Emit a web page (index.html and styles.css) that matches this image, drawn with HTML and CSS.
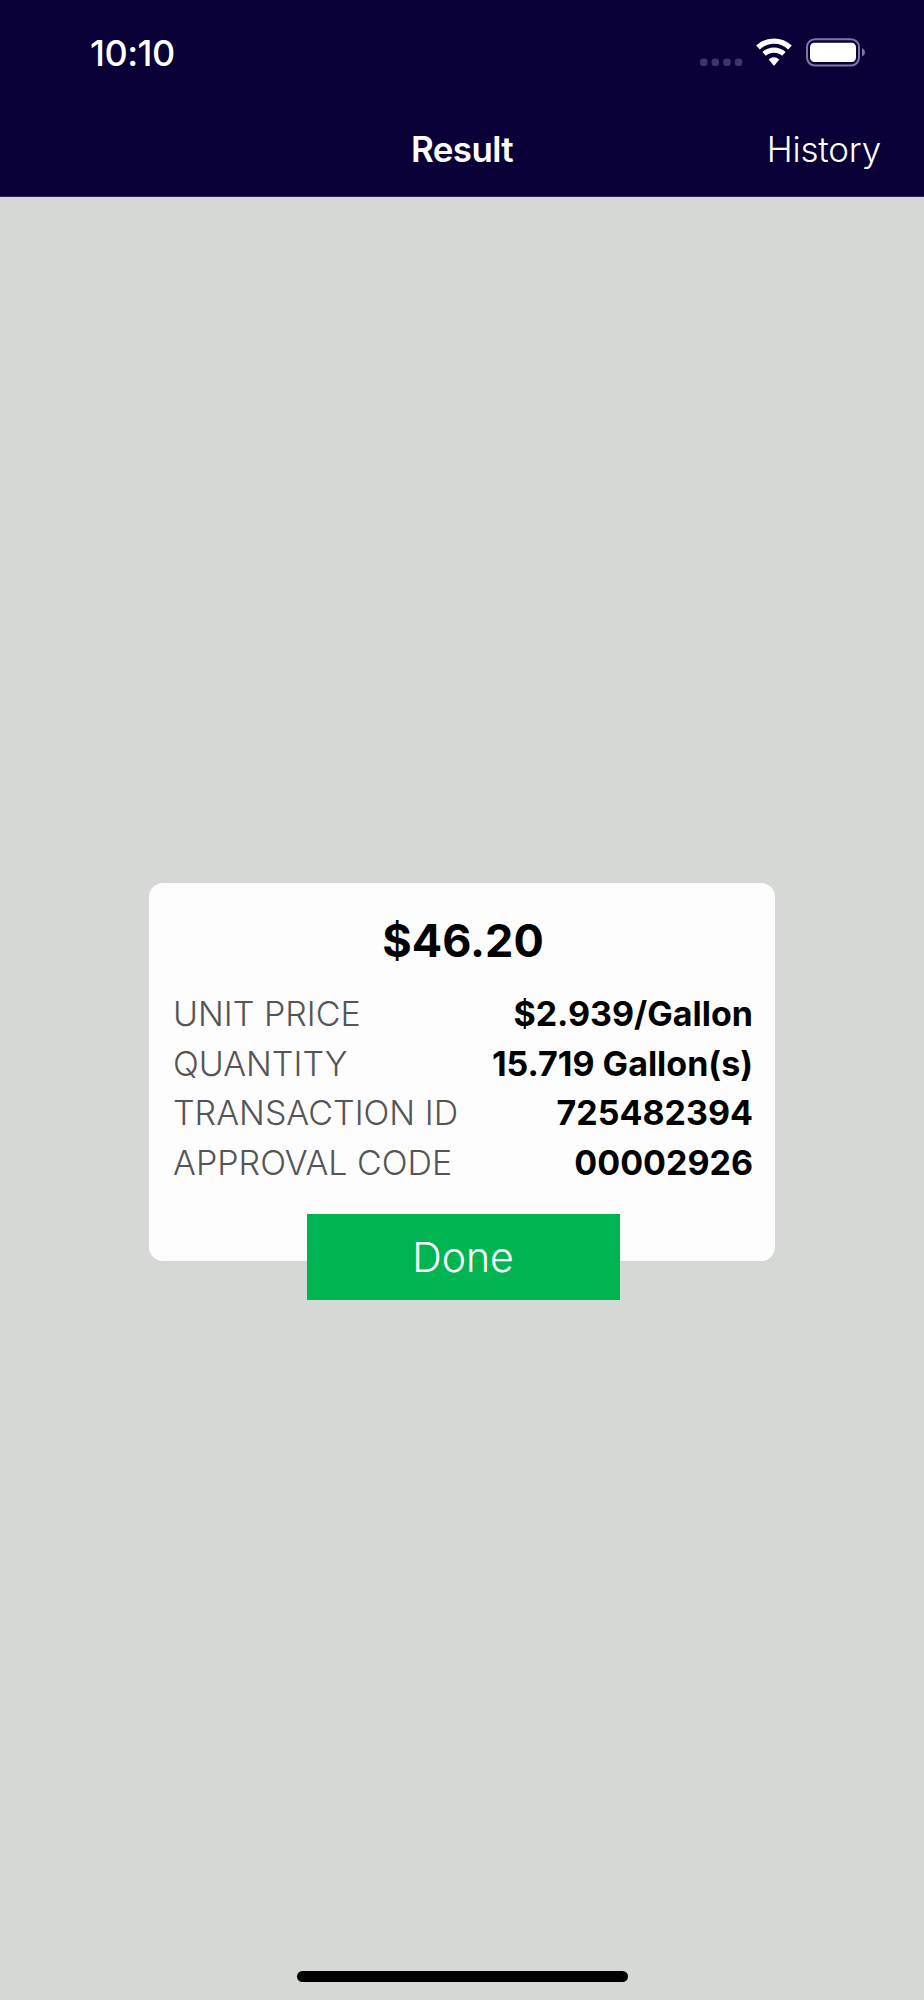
FILE: index.html
```html
<!DOCTYPE html>
<html lang="en">
<head>
<meta charset="utf-8">
<title>Result</title>
<link rel="stylesheet" href="styles.css">
</head>
<body>
<div class="screen">
  <header class="header">
    <div class="status">
      <span class="time">10:10</span>
      <svg class="status-icons" width="170" height="32" viewBox="0 0 170 32">
        <g fill="#3d3468">
          <rect x="0" y="20.5" width="7.5" height="7.5" rx="3"/>
          <rect x="11.6" y="20.5" width="7.5" height="7.5" rx="3"/>
          <rect x="23.2" y="20.5" width="7.5" height="7.5" rx="3"/>
          <rect x="34.8" y="20.5" width="7.5" height="7.5" rx="3"/>
        </g>
        <g fill="none" stroke="#fff">
          <path d="M58 9.4A23.5 23.5 0 0 1 90 9.4" stroke-width="5.4"/>
          <path d="M64.1 15.9A14.7 14.7 0 0 1 83.9 15.9" stroke-width="5.2"/>
        </g>
        <path d="M68.7 21.6Q74 17 79.3 21.6L74.6 27.2Q74 27.8 73.4 27.2Z" fill="#fff"/>
        <rect x="107" y="1.2" width="52" height="26.4" rx="8" fill="none" stroke="#7e779d" stroke-width="2"/>
        <rect x="110" y="4.7" width="46" height="19.4" rx="4.5" fill="#fff"/>
        <path d="M162 10Q165 11.5 165 14.3T162 18.6Z" fill="#7e779d"/>
      </svg>
    </div>
    <nav class="nav">
      <span></span>
      <h1 class="title">Result</h1>
      <a class="history">History</a>
    </nav>
  </header>
  <main class="content">
    <section class="card">
      <div class="amount">$46.20</div>
      <dl class="details">
        <div class="row"><dt class="l1">UNIT PRICE</dt><dd class="v1">$2.939/Gallon</dd></div>
        <div class="row"><dt class="l2">QUANTITY</dt><dd class="v2">15.719 Gallon(s)</dd></div>
        <div class="row"><dt class="l3">TRANSACTION ID</dt><dd class="v3">725482394</dd></div>
        <div class="row"><dt class="l4">APPROVAL CODE</dt><dd class="v4">00002926</dd></div>
      </dl>
      <button class="done"><span>Done</span></button>
    </section>
  </main>
  <div class="home-bar"></div>
</div>
</body>
</html>
```
FILE: styles.css
```css
* { box-sizing: border-box; margin: 0; padding: 0; }
body { font-family: Inter, "Liberation Sans", sans-serif; background: #d6d8d5; }
.screen { width: 924px; height: 2000px; display: flex; flex-direction: column; align-items: center; background: #d6d8d5; }
.header { width: 100%; height: 197px; background: #090038; border-bottom: 1px solid #2b2451; color: #fff; }
.status { height: 106px; padding: 31px 0 0 90px; display: flex; align-items: flex-start; }
.time { width: 610px; font-size: 36px; line-height: 44px; font-weight: 500; letter-spacing: -0.5px; }
.status-icons { margin-top: 7px; }
.nav { display: grid; grid-template-columns: 1fr auto 1fr; padding: 0 43px; line-height: 44px; font-size: 35px; margin-top: 21px; }
.title { font-size: 35px; font-weight: 600; letter-spacing: -0.6px; }
.history { font-weight: 300; justify-self: end; letter-spacing: -0.2px; }
.content { padding-top: 686px; }
.card { width: 626px; height: 378px; padding: 31px 22px 0 24px; border-radius: 14px; background: #fdfdfd; display: flex; flex-direction: column; align-items: center; }
.amount { font-size: 45px; line-height: 54px; font-weight: 700; color: #000; letter-spacing: 0; }
.details { width: 100%; margin-top: 21px; }
.row { height: 49.7px; display: flex; justify-content: space-between; line-height: 50px; font-size: 34px; white-space: nowrap; }
dt { font-weight: 300; color: #555; }
dd { font-weight: 700; color: #000; }
.done { flex: none; width: 313px; height: 86px; margin-top: 26px; border: 0; background: #00b551; color: #fff; font-family: inherit; font-size: 41px; font-weight: 300; }
.home-bar { width: 331px; height: 11px; margin-top: 710px; border-radius: 6px; background: #000; }
```
